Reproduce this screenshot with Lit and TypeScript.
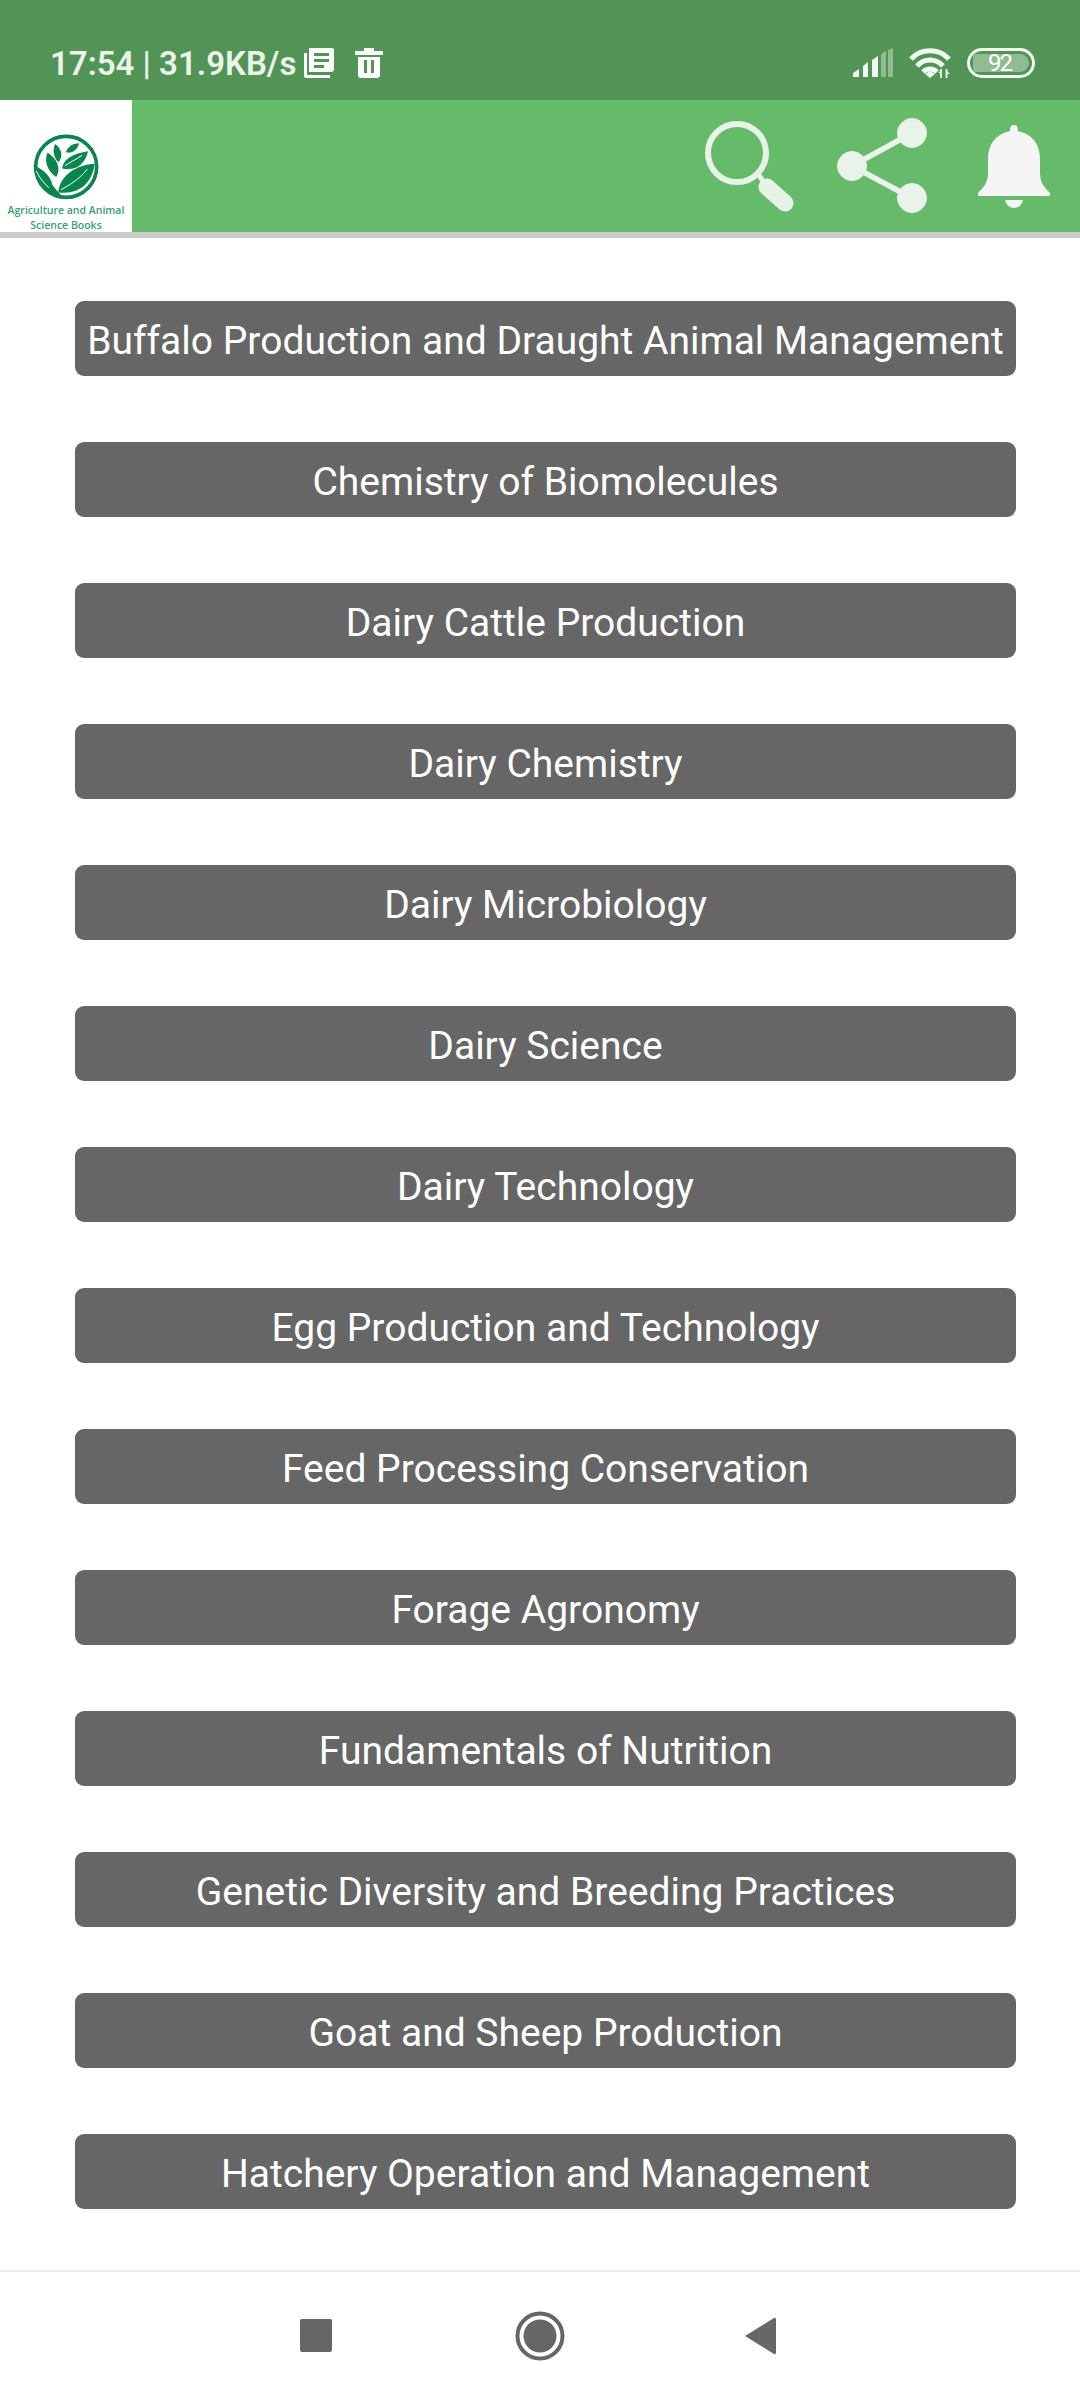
import { LitElement, css, html, svg } from 'lit'
import { customElement } from 'lit/decorators.js'

const BOOKS = [
  'Buffalo Production and Draught Animal Management',
  'Chemistry of Biomolecules',
  'Dairy Cattle Production',
  'Dairy Chemistry',
  'Dairy Microbiology',
  'Dairy Science',
  'Dairy Technology',
  'Egg Production and Technology',
  'Feed Processing Conservation',
  'Forage Agronomy',
  'Fundamentals of Nutrition',
  'Genetic Diversity and Breeding Practices',
  'Goat and Sheep Production',
  'Hatchery Operation and Management',
]

const logoMark = svg`
  <svg class="mark" viewBox="90 395 215 205" width="72" height="68">
    <circle cx="198" cy="497" r="92" fill="none" stroke="#0b8550" stroke-width="11"/>
    <path fill="#0b8550" d="M100 492C128 504 152 524 156 550C166 564 178 578 192 590C146 590 104 552 100 492Z"/>
    <path fill="#0b8550" d="M284 488C230 492 180 520 174 574C236 582 276 548 284 488Z"/>
    <path fill="#0b8550" d="M264 450C224 456 190 470 186 502C226 510 254 492 264 450Z"/>
    <path fill="#0b8550" d="M237 426C220 426 202 436 197 453C216 458 232 446 237 426Z"/>
    <path fill="#0b8550" d="M165 428C156 446 160 470 175 483C190 464 184 442 165 428Z"/>
    <path fill="#0b8550" d="M142 454C130 480 142 510 168 528C184 502 170 472 142 454Z"/>
    <path fill="none" stroke="#fff" stroke-width="3" d="M262 504C236 536 208 552 182 566M108 510C118 530 130 546 146 560M246 462C226 476 208 484 194 494"/>
  </svg>
`

const docIcon = svg`
  <svg viewBox="0 0 30 30" width="30" height="30" fill="#fff">
    <path fill-rule="evenodd" d="M5 0H28Q30 0 30 2V21Q30 24 27 24H5ZM10 5V8H25V5ZM10 11V14H25V11ZM10 17V20H20V17Z"/>
    <path d="M0 5H3V27H26V30H2Q0 30 0 28Z"/>
  </svg>
`

const trashIcon = svg`
  <svg viewBox="0 0 28 30" width="28" height="30" fill="#fff">
    <path d="M9 0H19V3H28V7H0V3H9Z"/>
    <path fill-rule="evenodd" d="M3 9H25V27Q25 30 22 30H6Q3 30 3 27ZM9 12V25H12V12ZM16 12V25H19V12Z"/>
  </svg>
`

const signalIcon = svg`
  <svg viewBox="0 0 40 29" width="40" height="29">
    <path fill="#f2f8f2" d="M0 29V25L6 21V29ZM10 29V18L15 14V29ZM19 29V12L25 8V29Z" />
    <path fill="#8fbc90" d="M28 29V6L33 3V29ZM35 29V2L40 0V29Z"/>
  </svg>
`

const wifiIcon = svg`
  <svg viewBox="0 0 42 30" width="42" height="30" fill="none" stroke="#f2f8f2" stroke-width="5">
    <path d="M2 11C12 0 30 0 40 11"/>
    <path d="M8 18C15 10 27 10 34 18"/>
    <path d="M14 24C18 20 24 20 28 24"/>
    <path fill="#f2f8f2" stroke="none" d="M16 26L21 23L26 26L21 30Z"/>
    <path stroke-width="1.8" d="M32 21V30M37.500 21V30"/>
    <path fill="#f2f8f2" stroke="none" d="M29 25H32V22ZM37 22V26H41Z"/>
  </svg>
`

const searchIcon = svg`
  <svg viewBox="0 0 92 100" width="92" height="100" fill="none" stroke="#e8f3e8">
    <circle cx="35" cy="37" r="29" stroke-width="6"/>
    <path stroke-width="5" d="M56 58L66 72"/>
    <path stroke-width="17" stroke-linecap="round" d="M65 71L83 87"/>
  </svg>
`

const shareIcon = svg`
  <svg viewBox="0 0 92 100" width="92" height="100" fill="#e9f3ea" stroke="#e9f3ea">
    <path fill="none" stroke-width="5.500" d="M77 17L17 50L77 82"/>
    <circle cx="77" cy="17" r="14.500"/>
    <circle cx="17" cy="50" r="14.500"/>
    <circle cx="77" cy="82" r="14.500"/>
  </svg>
`

const bellIcon = svg`
  <svg viewBox="0 0 72 84" width="72" height="84" fill="#f5f5f5">
    <path d="M36 0C39 0 40 2 40 6C54 9 62 19 62 34V48C62 58 67 63 72 68V71H0V68C5 63 10 58 10 48V34C10 19 18 9 32 6C32 2 33 0 36 0Z"/>
    <path d="M27 75H45C44 80 40 83 36 83C32 83 28 80 27 75Z"/>
  </svg>
`

@customElement('app-root')
export class AppRoot extends LitElement {
  static styles = css`
    :host {
      display: flex;
      flex-direction: column;
      height: 2400px;
      background: #fff;
      font-family: Roboto, 'Liberation Sans', sans-serif;
    }
    svg {
      display: block;
      flex: none;
    }
    .status {
      height: 100px;
      box-sizing: border-box;
      padding: 48px 45px 0 50px;
      display: flex;
      align-items: flex-start;
      background: #529455;
    }
    .clock {
      margin-top: -2px;
      font-size: 33px;
      line-height: 36px;
      font-weight: 600;
      color: #eaf4ea;
      white-space: nowrap;
    }
    .doc {
      margin-left: 8px;
    }
    .trash {
      margin-left: 21px;
    }
    .right {
      margin-left: auto;
      display: flex;
      gap: 16px;
    }
    .battery {
      box-sizing: border-box;
      width: 68px;
      height: 30px;
      border: 3px solid #f2f8f2;
      border-radius: 15px;
      padding: 3px;
    }
    .battery div {
      height: 100%;
      box-sizing: border-box;
      padding-right: 3px;
      border-radius: 3px 9px 9px 3px;
      background: #8fbc90;
      text-align: center;
      font-size: 24px;
      line-height: 18px;
      letter-spacing: -2px;
      color: #fff;
    }
    .bar {
      height: 132px;
      display: flex;
      background: #66bb6a;
      border-bottom: 6px solid #cccccc;
    }
    .logo {
      width: 132px;
      background: #fff;
      display: flex;
      flex-direction: column;
      align-items: center;
      padding-top: 33px;
      box-sizing: border-box;
    }
    .logo p {
      margin: 2px 0 0;
      font-family: 'Open Sans', sans-serif;
      font-size: 10.5px;
      line-height: 15px;
      font-weight: 600;
      text-align: center;
      white-space: nowrap;
      color: #3a9f70;
    }
    .actions {
      margin-left: auto;
      display: flex;
      padding: 16px 30px 0 0;
    }
    .share {
      margin-left: 41px;
    }
    .bell {
      margin: 9px 0 0 51px;
    }
    .list {
      flex: 1;
      padding: 63px 64px 0 75px;
      display: flex;
      flex-direction: column;
      gap: 66px;
    }
    .book {
      box-sizing: border-box;
      height: 75px;
      padding-top: 3px;
      border-radius: 9px;
      background: #666666;
      color: #fff;
      font-size: 39px;
      line-height: 75px;
      text-align: center;
      white-space: nowrap;
    }
    .nav {
      height: 130px;
      border-top: 2px solid #eeeeee;
      display: flex;
      align-items: center;
      justify-content: center;
      box-sizing: border-box;
    }
    .nav svg {
      fill: #666666;
    }
  `

  render() {
    return html`
      <div class="status">
        <div class="clock">17:54 | 31.9KB/s</div>
        <div class="doc">${docIcon}</div>
        <div class="trash">${trashIcon}</div>
        <div class="right">
          ${signalIcon} ${wifiIcon}
          <div class="battery"><div>92</div></div>
        </div>
      </div>
      <div class="bar">
        <div class="logo">
          ${logoMark}
          <p>Agriculture and Animal<br />Science Books</p>
        </div>
        <div class="actions">
          ${searchIcon}
          <div class="share">${shareIcon}</div>
          <div class="bell">${bellIcon}</div>
        </div>
      </div>
      <div class="list">
        ${BOOKS.map((b) => html`<div class="book">${b}</div>`)}
      </div>
      <div class="nav">
        <svg viewBox="0 -6 480 50" width="480" height="50">
          <rect x="0" y="2" width="32" height="33" rx="2" />
          <circle cx="240" cy="19" r="22.500" fill="none" stroke="#666" stroke-width="4" />
          <circle cx="240" cy="19" r="16.500" />
          <path d="M445 19L474 1Q476 0 476 3V35Q476 38 474 37Z" />
        </svg>
      </div>
    `
  }
}
